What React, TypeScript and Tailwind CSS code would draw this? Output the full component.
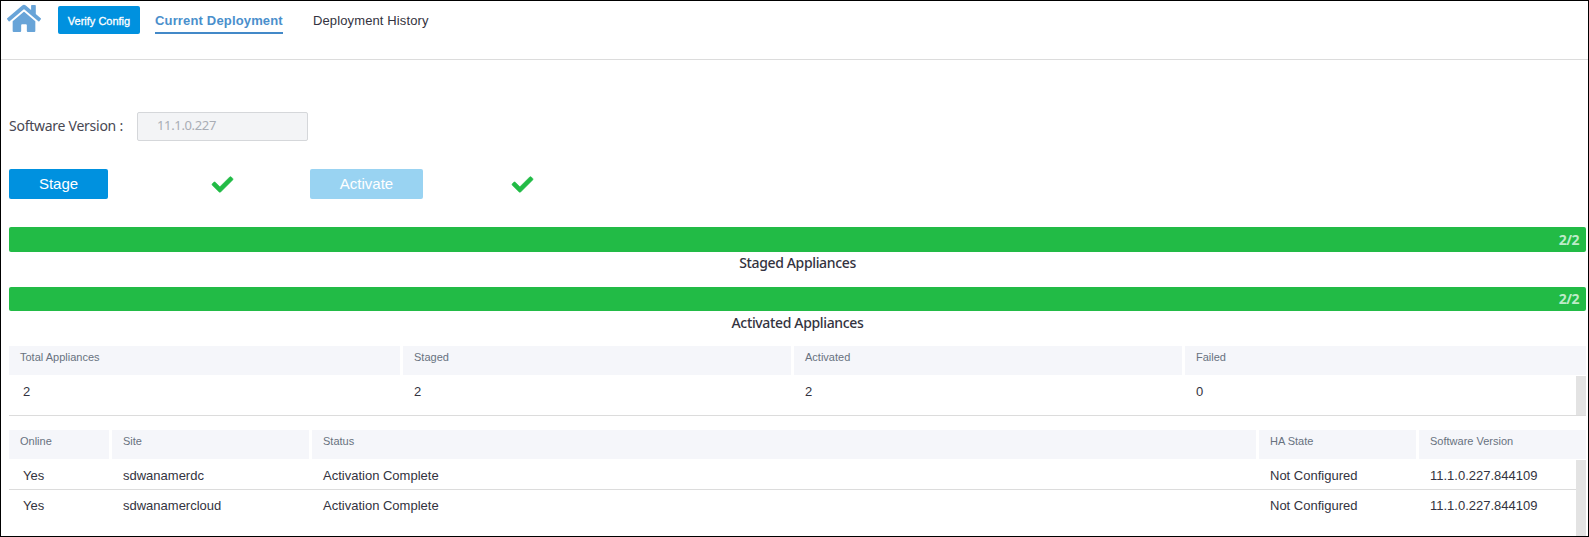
import React from "react";
import { FaCheck, FaHome } from "react-icons/fa";

const summary = [
  { label: "Total Appliances", value: "2" },
  { label: "Staged", value: "2" },
  { label: "Activated", value: "2" },
  { label: "Failed", value: "0" },
];

const columns = ["Online", "Site", "Status", "HA State", "Software Version"];
const sites = [
  ["Yes", "sdwanamerdc", "Activation Complete", "Not Configured", "11.1.0.227.844109"],
  ["Yes", "sdwanamercloud", "Activation Complete", "Not Configured", "11.1.0.227.844109"],
];

function Progress({ label, size, labelSize }: { label: string; size: string; labelSize: string }) {
  return (
    <div className="h-[60px]">
      <div className={`flex items-center justify-end rounded-[2px] bg-[#22bb46] pr-[7px] pb-px text-[14px] font-bold tracking-[-0.5px] text-[#bdebc8] ${size}`}>
        2/2
      </div>
      <div className={`text-center text-[14px] font-medium tracking-[-0.35px] text-[#333340] ${labelSize}`}>{label}</div>
    </div>
  );
}

function HeaderCell({ children }: { children: React.ReactNode }) {
  return <div className="h-[29px] bg-[#f5f6fa] pl-[11px] text-[11px] leading-[22px] text-[#68727f]">{children}</div>;
}

export default function App() {
  return (
    <div className="flex h-[537px] w-[1589px] flex-col overflow-hidden border border-black bg-white font-['Liberation_Sans',sans-serif] text-[13px] text-[#333340]">
      <header className="flex h-[59px] shrink-0 items-start border-b border-[#dcdcdc] pl-1.5">
        <FaHome className="mt-0.5 h-[31px] w-[34px] shrink-0 text-[#68a4d8]" preserveAspectRatio="none" />
        <button className="mt-[5px] ml-[17px] h-7 w-[82px] rounded-[2px] bg-[#0091df] pt-0.5 text-[11px] text-white [-webkit-text-stroke:0.3px_white]">Verify Config</button>
        <nav className="mt-[5px] ml-[15px] flex gap-[30px]">
          <a className="h-7 w-32 border-b-2 border-[#4389c8] leading-[29px] font-bold tracking-[0.16px] whitespace-nowrap text-[#4a8fcc]">Current Deployment</a>
          <a className="h-7 leading-[29px] tracking-[0.12px] whitespace-nowrap">Deployment History</a>
        </nav>
      </header>

      <main className="flex flex-1 flex-col pr-0.5 pl-2">
        <div className="mt-[52px] flex h-[29px] items-center font-['Noto_Sans',sans-serif] text-[14px]">
          <label className="w-32 pb-0.5 tracking-[-0.26px] whitespace-nowrap text-[#484853]">Software Version :</label>
          <div className="h-[29px] w-[171px] rounded-[2px] border border-[#d5d7da] bg-[#f3f4f6] pl-[19px] text-[13px] leading-[25px] tracking-[-0.35px] text-[#a9adb5]">11.1.0.227</div>
        </div>

        <div className="mt-7 flex h-[30px] items-center text-[15px]">
          <button className="h-[30px] w-[99px] rounded-[2px] bg-[#0091df] text-white">Stage</button>
          <FaCheck className="ml-[104px] h-[21px] w-[21px] overflow-visible stroke-[#22bb46] stroke-[14px] text-[#22bb46]" />
          <button className="ml-[77px] h-[30px] w-[113px] rounded-[2px] bg-[#99d3f2] text-white">Activate</button>
          <FaCheck className="ml-[89px] h-[21px] w-[21px] overflow-visible stroke-[#22bb46] stroke-[14px] text-[#22bb46]" />
        </div>

        <section className="mt-7 h-[119px] font-['Noto_Sans',sans-serif]">
          <Progress label="Staged Appliances" size="h-[25px]" labelSize="leading-[22px]" />
          <Progress label="Activated Appliances" size="h-[24px]" labelSize="leading-[24px]" />
        </section>

        <section className="h-[70px] border-b border-[#dcdcdc]">
          <div className="grid grid-cols-[391px_388px_388px_1fr] gap-x-[3px]">
            {summary.map((item) => <HeaderCell key={item.label}>{item.label}</HeaderCell>)}
          </div>
          <div className="mt-px flex h-[39px]">
            <div className="grid flex-1 grid-cols-[391px_388px_388px_1fr] gap-x-[3px] leading-[31px]">
              {summary.map((item) => <div key={item.label} className="pl-[11px] first:pl-[14px]">{item.value}</div>)}
            </div>
            <div className="w-2.5 bg-[#e3e3e3]" />
          </div>
        </section>

        <section className="mt-3.5">
          <div className="grid grid-cols-[100px_197px_944px_157px_1fr] gap-x-[3px]">
            {columns.map((column) => <HeaderCell key={column}>{column}</HeaderCell>)}
          </div>
          <div className="mt-px flex h-[76px]">
            <div className="flex-1">
              {sites.map((site) => (
                <div key={site[1]} className="grid h-[30px] grid-cols-[100px_197px_944px_157px_1fr] gap-x-[3px] border-b border-[#dcdcdc] leading-[31px] last:border-0">
                  {site.map((value) => <div key={value} className="pl-[11px] first:pl-[14px]">{value}</div>)}
                </div>
              ))}
            </div>
            <div className="w-2.5 bg-[#e3e3e3]" />
          </div>
        </section>
      </main>
    </div>
  );
}
